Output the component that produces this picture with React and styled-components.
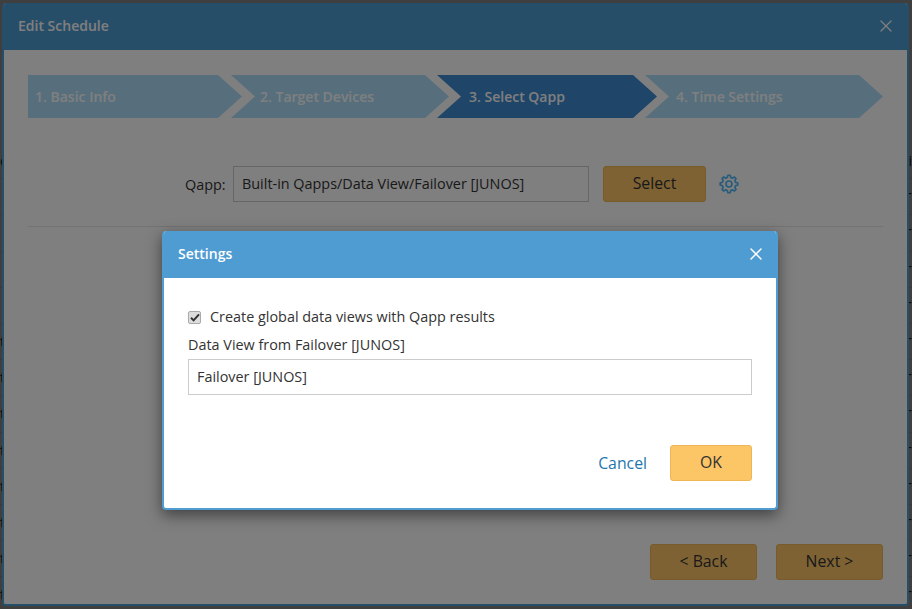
import React from 'react'
import styled, { createGlobalStyle } from 'styled-components'
import { X } from 'lucide-react'

const GlobalStyle = createGlobalStyle`
  html, body {
    margin: 0;
    padding: 0;
    height: 100%;
    overflow: hidden;
    font-family: "Open Sans", "Liberation Sans", sans-serif;
    font-size: 14.4px;
    color: #333;
  }
  * { box-sizing: border-box; }
`

const Page = styled.div`
  position: relative;
  width: 912px;
  height: 609px;
  overflow: hidden;
  background: #fff;
`

const BackRows = styled.div`
  display: flex;
  flex-direction: column;
  padding-top: 143px;
`

const BackRow = styled.div`
  display: flex;
  justify-content: space-between;
  height: 36.2px;
  line-height: 36px;
  border-bottom: 1px solid #e4e4e4;
  font-size: 14px;
  color: #333;
`

const BackCellRight = styled.span`
  line-height: ${p => (p.$dash ? 28 : 36)}px;
`

const Backdrop = styled.div`
  position: absolute;
  inset: 0;
  background: rgba(0, 0, 0, 0.5);
`

const Dialog = styled.div`
  position: absolute;
  display: flex;
  flex-direction: column;
  border: 2px solid #4f9cd3;
  border-top: 0;
  border-radius: 4px;
  overflow: hidden;
  background: #fff;
`

const OuterDialog = styled(Dialog)`
  left: 2px;
  top: 3px;
  width: 907px;
  height: 603px;
`

const InnerDialog = styled(Dialog)`
  left: 162px;
  top: 231px;
  width: 616px;
  height: 279px;
  box-shadow: 0 5px 15px rgba(0, 0, 0, 0.5);
`

const DialogHeader = styled.div`
  display: flex;
  align-items: center;
  justify-content: space-between;
  flex: none;
  height: 47px;
  padding: 0 ${p => p.$closeInset}px 2px 16px;
  margin: 0 -2px;
  background: #4f9cd3;
  color: #fff;
  font-size: 14px;
  font-weight: 600;
`

const CloseButton = styled.span`
  display: flex;
  color: #fff;
`

const OuterBody = styled.div`
  display: flex;
  flex-direction: column;
  flex: 1;
  padding: 25px 24px 24px 24px;
  background: #fff;
`

const Steps = styled.div`
  display: flex;
`

const Step = styled.div`
  flex: none;
  width: ${p => p.$width}px;
  height: 43px;
  margin-right: ${p => p.$gap}px;
  padding-left: ${p => p.$pad}px;
  line-height: 43px;
  font-size: 14px;
  font-weight: 600;
  color: #fff;
  background: ${p => (p.$active ? '#3f8bd3' : '#aedefa')};
  clip-path: polygon(
    0 0,
    calc(100% - 24px) 0,
    100% 50%,
    calc(100% - 24px) 100%,
    0 100%,
    ${p => (p.$notch ? '24px 50%' : '0 100%')}
  );
`

const QappRow = styled.div`
  display: flex;
  align-items: center;
  margin-top: 48px;
  padding-left: 157px;
  height: 36px;
`

const QappLabel = styled.label`
  width: 48px;
  flex: none;
`

const QappField = styled.div`
  width: 356px;
  height: 36px;
  padding-left: 8px;
  line-height: 33px;
  border: 1px solid #ccc;
`

const Button = styled.button`
  height: 36px;
  padding: 0 0 2px;
  border: 1px solid #eeb655;
  border-radius: 3px;
  background: #fcc566;
  color: #333;
  font-family: inherit;
  font-size: 15.8px;
`

const SelectButton = styled(Button)`
  width: 103px;
  margin-left: 14px;
`

const GearIcon = styled.svg`
  width: 20px;
  height: 20px;
  margin-left: 13px;
  color: #50b8f5;
`

const Divider = styled.div`
  height: 1px;
  margin-top: 24px;
  background: #e6e6e6;
`

const Footer = styled.div`
  display: flex;
  justify-content: flex-end;
  gap: 19px;
  margin-top: auto;
`

const NavButton = styled(Button)`
  width: 107px;
`

const InnerBody = styled.div`
  display: flex;
  flex-direction: column;
  flex: 1;
  padding: 28px 24px 27px 24px;
`

const CheckRow = styled.label`
  display: flex;
  align-items: center;
  height: 20px;
`

const CheckBox = styled.span`
  display: flex;
  align-items: center;
  justify-content: center;
  width: 13px;
  height: 13px;
  margin: 3px 9px 0 0;
  border: 1px solid #aaa;
  border-radius: 2px;
  background: #ddd;
`

const FieldLabel = styled.div`
  margin-top: 9px;
  height: 20px;
  line-height: 20px;
`

const TextField = styled.input`
  width: 100%;
  height: 36px;
  margin-top: 4px;
  padding: 0 8px 2px;
  border: 1px solid #ccc;
  outline: none;
  font-family: inherit;
  font-size: 14.4px;
  color: #333;
`

const DialogActions = styled.div`
  display: flex;
  align-items: center;
  justify-content: flex-end;
  gap: 23px;
  margin-top: auto;
`

const CancelLink = styled.a`
  color: #1f76ad;
  font-size: 15.8px;
`

const OkButton = styled(Button)`
  width: 82px;
`

const steps = [
  { label: '1. Basic Info', width: 214, gap: -11, pad: 7 },
  { label: '2. Target Devices', width: 218, gap: -12, pad: 29, notch: true },
  { label: '3. Select Qapp', width: 220, gap: -12, pad: 32, notch: true, active: true },
  { label: '4. Time Settings', width: 238, gap: 0, pad: 31, notch: true },
]

// what sticks out left and right of the big dialog
const backRows = [
  ['o', 'i'], ['', '-'], ['', '-'], ['', '-'], ['', '-'], ['t', '-'], ['t', '-'],
  ['t', '-'], ['t', '-'], ['t', '-'], ['t', '-'], ['t', '-'], ['t', '-'],
]

// eight toothed gear outline
function gearPath() {
  const teeth = 8
  const pts = []
  for (let i = 0; i < teeth; i++) {
    const a = (i * 2 * Math.PI) / teeth
    const w = Math.PI / teeth
    const rows = [
      [8.2, a - w * 0.62],
      [10.6, a - w * 0.34],
      [10.6, a + w * 0.34],
      [8.2, a + w * 0.62],
    ]
    rows.forEach(([r, t]) => {
      pts.push(`${(12 + r * Math.sin(t)).toFixed(2)} ${(12 - r * Math.cos(t)).toFixed(2)}`)
    })
  }
  return `M${pts.join(' L')} Z`
}

function Gear() {
  return (
    <GearIcon viewBox="0 0 24 24" fill="none" stroke="currentColor" strokeWidth="2" strokeLinejoin="round">
      <path d={gearPath()} />
      <circle cx="12" cy="12" r="3.6" />
    </GearIcon>
  )
}

export default function App() {
  return (
    <Page>
      <GlobalStyle />
      <BackRows>
        {backRows.map(([left, right], i) => (
          <BackRow key={i}>
            <span>{left}</span>
            <BackCellRight $dash={right === '-'}>{right}</BackCellRight>
          </BackRow>
        ))}
      </BackRows>
      <Backdrop />
      <OuterDialog>
        <DialogHeader $closeInset={13}>
          Edit Schedule
          <CloseButton><X size={20} strokeWidth={1.5} /></CloseButton>
        </DialogHeader>
        <OuterBody>
          <Steps>
            {steps.map(s => (
              <Step key={s.label} $width={s.width} $gap={s.gap} $pad={s.pad} $notch={s.notch} $active={s.active}>
                {s.label}
              </Step>
            ))}
          </Steps>
          <QappRow>
            <QappLabel>Qapp:</QappLabel>
            <QappField>Built-in Qapps/Data View/Failover [JUNOS]</QappField>
            <SelectButton>Select</SelectButton>
            <Gear />
          </QappRow>
          <Divider />
          <Footer>
            <NavButton>&lt; Back</NavButton>
            <NavButton>Next &gt;</NavButton>
          </Footer>
        </OuterBody>
      </OuterDialog>
      <Backdrop />
      <InnerDialog>
        <DialogHeader $closeInset={12}>
          Settings
          <CloseButton><X size={20} strokeWidth={1.75} /></CloseButton>
        </DialogHeader>
        <InnerBody>
          <CheckRow>
            <CheckBox>
              <svg width="10" height="9" viewBox="0 0 10 9">
                <path d="M1 4.8 L3.6 7.4 L9 1.4" fill="none" stroke="#333" strokeWidth="2" />
              </svg>
            </CheckBox>
            Create global data views with Qapp results
          </CheckRow>
          <FieldLabel>Data View from Failover [JUNOS]</FieldLabel>
          <TextField defaultValue="Failover [JUNOS]" />
          <DialogActions>
            <CancelLink>Cancel</CancelLink>
            <OkButton>OK</OkButton>
          </DialogActions>
        </InnerBody>
      </InnerDialog>
    </Page>
  )
}
